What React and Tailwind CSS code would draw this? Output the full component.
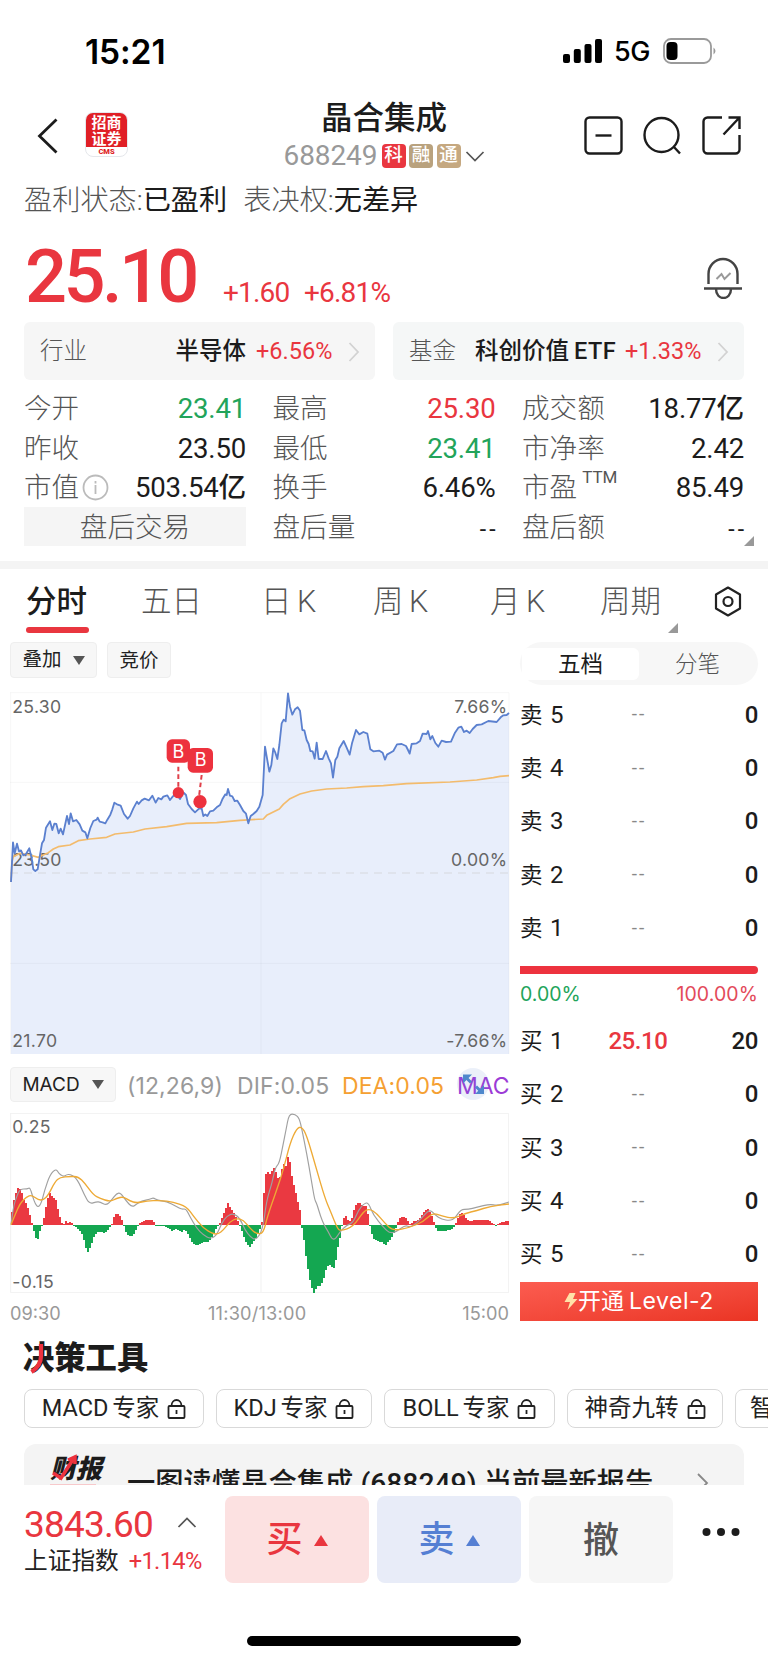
import React from 'react';

const PRICE_LINE = [
  [33,606],[39,487],[44,520],[51,491],[57,514],[63,511],[70,526],[78,522],[88,505],[95,535],[100,568],[106,573],[113,568],[120,525],[126,490],[132,480],[138,443],[150,424],[157,450],[163,431],[169,432],[176,460],[182,446],[189,463],[201,408],[207,432],[212,400],[219,424],[229,420],[239,433],[247,452],[256,457],[262,475],[271,444],[280,423],[290,419],[293,413],[299,425],[308,427],[316,430],[322,419],[331,404],[337,388],[343,368],[351,373],[362,377],[372,402],[383,416],[390,408],[400,385],[411,365],[416,372],[425,361],[434,356],[447,361],[457,347],[467,368],[475,354],[484,358],[490,350],[502,346],[510,360],[518,350],[528,340],[540,357],[550,337],[558,345],[564,372],[575,387],[585,397],[597,386],[605,385],[610,408],[616,403],[622,408],[630,394],[640,392],[650,382],[660,375],[667,358],[676,343],[680,345],[684,327],[690,347],[697,349],[704,363],[712,362],[720,375],[730,393],[738,401],[745,430],[752,408],[760,402],[770,393],[778,380],[788,345],
  [795,200],[801,235],[808,275],[814,255],[820,205],[826,218],[832,237],[838,195],[845,130],[851,119],[857,124],[864,40],[870,80],[877,104],[885,88],[893,82],[900,92],[907,150],[913,151],[920,180],[926,192],[931,213],[938,214],[944,236],[950,188],[956,237],[968,237],[978,213],[986,235],[993,250],[999,293],[1006,240],[1012,230],[1018,205],[1031,183],[1040,203],[1049,224],[1056,190],[1068,150],[1078,163],[1090,156],[1102,161],[1111,208],[1120,214],[1138,212],[1148,218],[1155,239],[1161,224],[1180,213],[1191,193],[1205,192],[1218,198],[1224,210],[1229,221],[1235,192],[1250,190],[1260,183],[1268,161],[1280,162],[1284,153],[1291,178],[1297,168],[1306,189],[1315,200],[1325,182],[1338,186],[1353,185],[1365,158],[1375,143],[1384,140],[1392,156],[1400,152],[1409,159],[1418,147],[1430,135],[1445,133],[1465,123],[1490,126],[1502,112],[1510,106],[1520,105],[1527,99],
];

const AVG_LINE = [
  [33,606],[36,545],[40,530],[60,520],[90,525],[115,532],[145,518],[160,507],[175,500],[210,495],[235,482],[270,477],[320,472],[345,462],[400,456],[435,447],[500,440],[560,430],[650,428],[720,421],[790,417],[800,406],[838,387],[850,373],[870,356],[900,342],[935,333],[980,327],[1040,324],[1090,320],[1150,317],[1220,311],[1350,306],[1430,300],[1480,293],[1500,289],[1527,287],
];

const MACD_HIST = [
  [33,554],[38,490],[45,470],[52,443],[64,450],[72,480],[80,490],[88,515],[94,545],[98,554],[102,572],[110,602],[115,595],[120,572],[126,554],[130,545],[138,500],[145,470],[150,458],[158,470],[168,480],[176,515],[184,545],[188,554],[196,548],[200,540],[206,552],[212,542],[220,554],[232,566],[244,578],[254,605],[262,640],[272,620],[282,590],[295,575],[315,578],[325,570],[335,554],[345,522],[357,522],[368,545],[374,560],[380,582],[392,590],[404,582],[412,560],[420,548],[440,540],[460,540],[466,556],[500,560],[515,572],[530,566],[545,578],[555,566],[565,585],[575,605],[590,618],[610,606],[625,606],[640,585],[652,560],[660,548],[672,520],[684,490],[696,510],[708,530],[716,548],[722,562],[735,600],[748,622],[760,608],[770,590],[780,566],[785,554],
  [788,530],[794,425],[800,392],[808,402],[814,400],[820,382],[827,392],[833,415],[840,412],[847,382],[853,371],[859,380],[864,350],[870,365],[876,407],[888,460],[895,490],[902,520],[906,565],[912,600],[920,665],[926,700],[934,740],[944,762],[950,738],[962,738],[970,720],[978,690],[986,675],[993,675],[1000,690],[1008,660],[1014,620],[1022,585],[1027,548],[1030,535],[1038,527],[1046,545],[1054,540],[1062,510],[1070,488],[1080,490],[1090,497],[1100,500],[1107,540],[1112,570],[1122,598],[1135,605],[1148,606],[1155,618],[1164,605],[1178,590],[1186,570],[1192,548],[1200,535],[1210,530],[1220,535],[1228,553],[1240,545],[1255,540],[1265,525],[1275,512],[1286,507],[1295,525],[1302,545],[1310,570],[1318,574],[1350,570],[1362,562],[1368,548],[1375,530],[1384,516],[1395,530],[1405,542],[1430,541],[1465,541],[1475,547],[1488,557],[1500,548],[1528,542],
];

const DIF_LINE = [
  [33,554],[40,500],[50,470],[60,447],[82,447],[90,442],[98,470],[106,492],[114,502],[124,490],[134,450],[150,404],[168,386],[176,400],[190,410],[200,404],[210,403],[226,412],[238,430],[252,462],[268,492],[290,485],[300,486],[320,496],[335,480],[350,460],[362,459],[378,482],[396,502],[410,492],[425,483],[450,478],[460,473],[472,481],[500,484],[530,500],[545,508],[558,506],[570,530],[590,565],[610,585],[632,597],[650,585],[665,550],[680,528],[700,520],[720,535],[735,570],[752,592],[768,600],[788,570],
  [800,480],[816,430],[826,382],[838,370],[850,310],[858,270],[867,222],[886,223],[898,235],[906,270],[920,340],[934,420],[944,480],[950,490],[962,530],[972,555],[985,575],[995,597],[1006,598],[1020,575],[1040,555],[1060,548],[1075,510],[1095,488],[1106,490],[1120,525],[1150,562],[1170,580],[1190,575],[1216,555],[1230,562],[1250,550],[1270,528],[1290,508],[1305,525],[1325,538],[1350,542],[1365,535],[1382,508],[1405,508],[1430,502],[1470,492],[1492,497],[1527,486],
];

const DEA_LINE = [
  [33,554],[45,525],[60,490],[80,470],[95,465],[115,480],[130,480],[145,465],[165,425],[180,412],[210,409],[235,410],[255,430],[280,465],[300,475],[330,485],[350,475],[370,470],[390,483],[410,489],[440,483],[480,481],[520,486],[560,500],[580,528],[610,565],[640,582],[655,582],[670,570],[690,545],[710,535],[730,540],[750,565],[770,582],[790,580],
  [802,530],[830,450],[850,390],[870,310],[890,265],[905,260],[920,285],[950,390],[975,475],[990,510],[1012,565],[1022,573],[1060,560],[1090,515],[1108,506],[1130,520],[1155,550],[1180,573],[1230,562],[1270,545],[1298,518],[1325,528],[1362,536],[1395,520],[1430,512],[1470,499],[1527,492],
];

const ZERO = 554;

const toPath = (pts) => 'M' + pts.map((p) => p.join(' ')).join('L');

// smooth curve through the midpoints
const toCurve = (pts) => {
  let d = `M${pts[0][0]} ${pts[0][1]}`;
  for (let i = 1; i < pts.length - 1; i++) {
    const [x, y] = pts[i];
    const [nx, ny] = pts[i + 1];
    d += `Q${x} ${y} ${(x + nx) / 2} ${(y + ny) / 2}`;
  }
  const last = pts[pts.length - 1];
  return `${d}L${last[0]} ${last[1]}`;
};

const valueAt = (pts, x) => {
  for (let i = 1; i < pts.length; i++) {
    if (pts[i][0] >= x) {
      const [x0, y0] = pts[i - 1];
      const [x1, y1] = pts[i];
      return y0 + ((y1 - y0) * (x - x0)) / (x1 - x0);
    }
  }
  return pts[pts.length - 1][1];
};

const bars = [];
for (let x = 36; x < 1526; x += 6) {
  bars.push({ x, y: valueAt(MACD_HIST, x) });
}

const stats = [
  [['今开', '23.41', 'text-[#22a45a]'], ['最高', '25.30', 'text-[#e9363f]'], ['成交额', '18.77亿', 'text-[#1c1c1c]']],
  [['昨收', '23.50', 'text-[#1c1c1c]'], ['最低', '23.41', 'text-[#22a45a]'], ['市净率', '2.42', 'text-[#1c1c1c]']],
  [['市值', '503.54亿', 'text-[#1c1c1c]'], ['换手', '6.46%', 'text-[#1c1c1c]'], ['市盈', '85.49', 'text-[#1c1c1c]']],
  [['盘后交易'], ['盘后量', '--', 'text-[#1c1c1c]'], ['盘后额', '--', 'text-[#1c1c1c]']],
];

const sells = [5, 4, 3, 2, 1];
const buys = [1, 2, 3, 4, 5];

const StatusBar = () => (
  <div className="flex h-[102px] items-center justify-between pl-[85px] pr-[51px]">
    <span className="mt-[2px] font-['Inter',sans-serif] text-[33.500px] font-semibold tracking-[-0.1px] text-black">15:21</span>
    <div className="flex items-center">
      <svg className="h-[24px] w-[40px]" viewBox="0 0 40 24">
        <rect x="0" y="15" width="7" height="9" rx="2" />
        <rect x="10.8" y="10" width="7" height="14" rx="2" />
        <rect x="21.5" y="5" width="7" height="19" rx="2" />
        <rect x="32" y="0" width="7" height="24" rx="2" />
      </svg>
      <span className="ml-[11px] mt-[2px] w-[49px] font-['Inter',sans-serif] text-[27px] font-medium tracking-[-0.5px] text-black">5G</span>
      <svg className="h-[26px] w-[54px]" viewBox="0 0 54 26">
        <rect x="1" y="1" width="47" height="24" rx="7" fill="none" stroke="#9a9a9a" strokeWidth="1.8" />
        <rect x="3.5" y="4" width="11" height="18" rx="4" />
        <path d="M50.5 9.500q4 3.500 0 7z" fill="#9a9a9a" />
      </svg>
    </div>
  </div>
);

const Header = () => (
  <div className="flex h-[70px] items-center pl-[36px]">
    <svg className="-mt-[2px] h-[36px] w-[22px]" viewBox="0 0 22 36" fill="none" stroke="#1c1c1c" strokeWidth="2.8">
      <path d="M20.500 1.500L3.500 18l17 16.500" />
    </svg>
    <div className="-mt-[6px] ml-[27px] flex h-[45px] w-[43px] flex-col items-center overflow-hidden rounded-lg border border-gray-200 bg-white">
      <div className="flex h-[34px] w-[43px] shrink-0 flex-col items-center justify-center bg-[#e01f26] font-['Noto_Sans_CJK_SC',sans-serif] text-[15px] font-bold leading-[16px] text-white">
        <span>招商</span>
        <span>证券</span>
      </div>
      <span className="font-['Roboto',sans-serif] text-[7.500px] font-black leading-[9px] text-[#e01f26]">CMS</span>
    </div>
    <div className="ml-[121px] flex w-[270px] flex-col items-center">
      <h1 className="h-[36px] text-[31.5px] font-medium leading-[38px] text-[#1c1c1c]">晶合集成</h1>
      <div className="mt-[2px] flex h-[36px] items-center">
        <span className="w-[98px] text-[28px] leading-[36px] tracking-[-0.1px] text-[#999]">688249</span>
        <div className="flex gap-[3.500px] text-[18.500px] font-medium leading-[23px] text-white">
          <span className="h-[24px] w-[24px] rounded bg-[#e9363f] text-center">科</span>
          <span className="h-[24px] w-[24px] rounded bg-[#b9a27e] text-center">融</span>
          <span className="h-[24px] w-[24px] rounded bg-[#c5a880] text-center">通</span>
        </div>
        <svg className="ml-[4px] h-[11px] w-[20px]" viewBox="0 0 20 11" fill="none" stroke="#555" strokeWidth="1.7">
          <path d="M1.500 1L10 9.500L18.500 1" />
        </svg>
      </div>
    </div>
    <div className="-mt-[3px] ml-[65px] flex gap-[20px]">
      <svg className="h-[39px] w-[39px]" viewBox="0 0 39 39" fill="none" stroke="#1c1c1c" strokeWidth="2.4">
        <rect x="1.500" y="1.500" width="36" height="36" rx="4" />
        <path d="M11.500 19.500h16" />
      </svg>
      <svg className="h-[39px] w-[39px]" viewBox="0 0 39 39" fill="none" stroke="#1c1c1c" strokeWidth="2.4">
        <circle cx="18.500" cy="19" r="17" />
        <path d="M30.500 30.500l6.500 7" />
      </svg>
      <svg className="h-[39px] w-[39px]" viewBox="0 0 39 39" fill="none" stroke="#1c1c1c" strokeWidth="2.4">
        <path d="M20 1.500H5.500a4 4 0 0 0-4 4v28a4 4 0 0 0 4 4h28a4 4 0 0 0 4-4V19" />
        <path d="M26.500 1.500H37.500V13M37.500 1.500L21.500 18.500" />
      </svg>
    </div>
  </div>
);

const Arrow = () => (
  <svg className="h-[20px] w-[12px]" viewBox="0 0 12 20" fill="none" stroke="#d2d2d2" strokeWidth="1.8">
    <path d="M1.500 1l8.500 9l-8.500 9" />
  </svg>
);

const Quote = () => (
  <>
    <div className="flex h-[54px] items-center pl-[24px] text-[28.2px] leading-[54px] text-[#1c1c1c]">
      <div className="mt-[3px] flex">
        <span className="font-light text-[#555]">盈利状态:</span>已盈利
        <span className="ml-[16px] font-light text-[#555]">表决权:</span>无差异
      </div>
    </div>
    <div className="flex h-[96px] items-center justify-between pl-[25px] pr-[25px]">
      <div className="flex items-baseline pt-[5px] text-[#e9363f]">
        <span className="w-[198px] text-[74px] font-medium leading-[100px] tracking-[-3.6px]">25.10</span>
        <span className="w-[81px] text-[28px] tracking-[-0.8px]">+1.60</span>
        <span className="text-[28px] tracking-[-0.8px]">+6.81%</span>
      </div>
      <svg className="mt-[7px] h-[42px] w-[40px]" viewBox="0 0 40 42" fill="none" stroke="#444" strokeWidth="2.4">
        <path d="M5.500 27V17a14.500 15 0 0 1 29 0v10M1 31.500h38M13 32c0 12 15 12 15 0" />
        <path d="M13.500 22l5-5l3 5l6-6" stroke="#999" strokeWidth="2" />
      </svg>
    </div>
    <div className="flex h-[58px] gap-[18px] px-[24px] text-[23.500px]">
      <div className="flex w-[351px] items-center rounded-md bg-[#f6f6f6] pl-[16px] pr-[15px] pt-[2px]">
        <span className="font-light text-[#555]">行业</span>
        <span className="ml-auto font-medium text-[#1c1c1c]">半导体</span>
        <span className="ml-[10px] w-[92px] text-[#e9363f]">+6.56%</span>
        <Arrow />
      </div>
      <div className="flex w-[351px] items-center rounded-md bg-[#f5f7f7] pl-[16px] pr-[15px] pt-[2px]">
        <span className="font-light text-[#555]">基金</span>
        <span className="ml-auto font-medium text-[#1c1c1c]">科创价值<span className="ml-[5px] tracking-[0.4px]">ETF</span></span>
        <span className="ml-[9px] w-[92px] text-[#e9363f]">+1.33%</span>
        <Arrow />
      </div>
    </div>
  </>
);

const Stats = () => (
  <div className="relative mt-[8px] px-[24px]">
    {stats.map((row, i) => (
      <div key={i} className="grid h-[39.500px] grid-cols-[222px_223px_222px] gap-x-[26.500px] text-[27.6px] leading-[41px]">
        {row.map(([label, value, color]) =>
          value ? (
            <div key={label} className="flex justify-between">
              <span className="flex font-light text-[#555]">
                {label}
                {label === '市值' && (
                  <svg className="ml-[3px] mt-[7px] h-[27px] w-[27px]" viewBox="0 0 27 27" fill="none" stroke="#bbb" strokeWidth="1.8">
                    <circle cx="13.500" cy="13.500" r="12" />
                    <path d="M13.500 11v9M13.500 7v2.500" />
                  </svg>
                )}
                {label === '市盈' && <sup className="-top-[9px] ml-[5px] text-[17px] font-normal leading-[39px]">TTM</sup>}
              </span>
              {value === '--' ? (
                <span className={`flex items-center gap-[3px] pt-[2px] ${color}`}>
                  <span className="text-[23px]">-</span>
                  <span className="text-[23px]">-</span>
                </span>
              ) : (
                <span className={`font-[450] tracking-[-0.2px] ${color}`}>{value}</span>
              )}
            </div>
          ) : (
            <div key={label} className="h-[39px] bg-[#f5f5f5] text-center font-light text-[#555]">{label}</div>
          )
        )}
      </div>
    ))}
    <svg className="absolute bottom-0 right-[14px] h-[10px] w-[10px]" viewBox="0 0 10 10" fill="#999">
      <path d="M10 0v10H0z" />
    </svg>
  </div>
);

const Tabs = () => (
  <div className="mt-[15px] border-t-8 border-[#f4f4f4]">
    <div className="relative flex h-[73px] pl-[26px] pr-[26px] text-[30.500px] font-light leading-[66px] text-[#555] [word-spacing:-2px]">
      <div className="mr-[52px] flex w-[63px] flex-col">
        <span className="h-[58px] font-medium text-[#1c1c1c]">分时</span>
        <span className="h-[6px] rounded-full bg-[#e9363f]" />
      </div>
      <span className="w-[120px]">五日</span>
      <span className="w-[112px]">日 K</span>
      <span className="w-[117px]">周 K</span>
      <span className="w-[110px]">月 K</span>
      <span className="flex-1">周期</span>
      <svg className="mt-[17px] h-[31px] w-[28px]" viewBox="0 0 28 31" fill="none" stroke="#222" strokeWidth="2.2">
        <path d="M14 1.500L26 8.500v14L14 29.500L2 22.500v-14z" strokeLinejoin="round" />
        <circle cx="14" cy="15.500" r="4.500" />
      </svg>
      <svg className="absolute right-[90px] top-[54px] h-[10px] w-[10px]" viewBox="0 0 10 10" fill="#999">
        <path d="M10 0v10H0z" />
      </svg>
    </div>
  </div>
);

const PriceChart = () => (
  <svg className="mt-[14px] h-[362px] w-[499px] overflow-visible" viewBox="30 36 1497 1086">
    <path d={`${toPath(PRICE_LINE)}V1122H33Z`} fill="#e8eefb" />
    <path d="M30 38H1527V1122M32 38V1122M30 307H1527M783 38V1122M30 850H1527" fill="none" stroke="#000" strokeOpacity="0.035" strokeWidth="3" />
    <path d="M30 579H1527" stroke="#dcdfe8" strokeWidth="4" strokeDasharray="24 18" />
    <g fill="#666" fontFamily="Inter, sans-serif" fontSize="53" letterSpacing="0.8">
      <text x="37" y="98">25.30</text>
      <text x="37" y="559">23.50</text>
      <text x="37" y="1102">21.70</text>
      <text x="1522" y="98" textAnchor="end">7.66%</text>
      <text x="1522" y="559" textAnchor="end">0.00%</text>
      <text x="1522" y="1102" textAnchor="end">-7.66%</text>
    </g>
    <path d={toPath(AVG_LINE)} fill="none" stroke="#f3bb6c" strokeWidth="5" strokeLinejoin="round" />
    <path d={toPath(PRICE_LINE)} fill="none" stroke="#5b80cf" strokeWidth="5.500" strokeLinejoin="round" />
    <g fill="#ed323e">
      <path d="M535 260V322M605 285L597 350" stroke="#e0404a" strokeWidth="6" strokeDasharray="14 9" />
      <circle cx="535" cy="338" r="17" />
      <circle cx="600" cy="365" r="20" />
      <rect x="500" y="178" width="70" height="70" rx="16" />
      <rect x="563" y="204" width="76" height="74" rx="16" />
      <g fill="#fff" fontFamily="Inter, sans-serif" fontSize="54" textAnchor="middle">
        <text x="535" y="234">B</text>
        <text x="602" y="259">B</text>
      </g>
    </g>
  </svg>
);

const MacdChart = () => (
  <svg className="mt-[11px] h-[180px] w-[499px]" viewBox="30 219 1497 540">
    <path d="M30 220H1526V758H32V220M783 220V758" fill="none" stroke="#f1f1f1" strokeWidth="3" />
    <g shapeRendering="crispEdges">
      {bars.map((b) => (
        <rect
          key={b.x}
          x={b.x - 3}
          y={Math.min(b.y, ZERO)}
          width="6"
          height={Math.max(Math.abs(b.y - ZERO), 3)}
          fill={b.y < ZERO ? '#ea3941' : '#14a751'}
        />
      ))}
    </g>
    <path d={toCurve(DIF_LINE)} fill="none" stroke="#a0a0a0" strokeWidth="3.500" />
    <path d={toCurve(DEA_LINE)} fill="none" stroke="#eeaa35" strokeWidth="4" />
    <g fill="#666" fontFamily="Inter, sans-serif" fontSize="53" letterSpacing="0.8">
      <text x="37" y="280">0.25</text>
      <text x="37" y="743">-0.15</text>
    </g>
  </svg>
);

const Charts = () => (
  <div className="w-[499px]">
    <div className="flex h-[36px] gap-[10px] text-[19.500px] leading-[36px] text-[#222]">
      <span className="flex w-[87px] items-center justify-center gap-[11px] rounded border border-[#eee] bg-[#f7f7f7]">
        叠加
        <svg className="h-[9px] w-[12px]" viewBox="0 0 12 9" fill="#555"><path d="M0 0h12L6 9z" /></svg>
      </span>
      <span className="w-[64px] rounded border border-[#eee] bg-[#f7f7f7] text-center">竞价</span>
    </div>
    <PriceChart />
    <div className="relative mt-[13px] flex h-[35px] items-center overflow-hidden whitespace-nowrap font-['Inter',sans-serif] text-[23px] leading-[38px] text-[#999]">
      <span className="flex h-[35px] w-[106px] shrink-0 items-center justify-center gap-[12px] rounded border border-[#eee] bg-[#f7f7f7] text-[19px] text-[#222]">
        MACD
        <svg className="h-[9px] w-[12px]" viewBox="0 0 12 9" fill="#555"><path d="M0 0h12L6 9z" /></svg>
      </span>
      <span className="ml-[11px] mt-[3px] w-[110px] shrink-0 tracking-[0.1px]">(12,26,9)</span>
      <span className="mt-[3px] w-[105px] shrink-0 tracking-[0.1px]">DIF:0.05</span>
      <span className="mt-[3px] w-[115px] shrink-0 tracking-[0.1px] text-[#f5a032]">DEA:0.05</span>
      <span className="mt-[3px] text-[#9c3bd6]">MAC</span>
      <svg className="absolute right-[19px] top-0 h-[34px] w-[34px]" viewBox="0 0 34 34">
        <circle cx="17" cy="17" r="16" fill="#5b80cf" fillOpacity="0.12" />
        <path d="M7 7.500h9l-9 9zM28 27h-9l9-9z" fill="#4f88cc" />
        <path d="M10 10.500l5 5M20 19.500l5 5" stroke="#4f88cc" strokeWidth="3" />
      </svg>
    </div>
    <MacdChart />
    <div className="flex h-[40px] justify-between font-['Inter',sans-serif] text-[18.200px] leading-[40px] text-[#999]">
      <span className="w-[198px]">09:30</span>
      <span className="flex-1 tracking-[0.2px]">11:30/13:00</span>
      <span>15:00</span>
    </div>
  </div>
);

const Level = ({ side, n, price, volume }) => (
  <div className="flex h-[53.300px] items-center text-[24px] text-[#1c1c1c]">
    <span className="w-[88px] text-[22.500px]">{side} <span className="ml-[2px] text-[24px]">{n}</span></span>
    {price ? (
      <span className="w-[60px] text-center font-medium tracking-[-0.4px] text-[#e9363f]">{price}</span>
    ) : (
      <span className="flex w-[60px] justify-center gap-[2px] text-[19px] text-[#888]">
        <span>-</span>
        <span>-</span>
      </span>
    )}
    <span className="ml-auto font-medium tracking-[-0.4px]">{volume}</span>
  </div>
);

const OrderBook = () => (
  <div className="w-[238px]">
    <div className="flex h-[43px] items-center rounded-full bg-[#f7f7f7] px-[2px] text-center text-[22.500px]">
      <span className="h-[32px] w-[117px] rounded-md bg-white leading-[33px] text-[#1c1c1c]">五档</span>
      <span className="flex-1 pt-[2px] font-light text-[#555]">分笔</span>
    </div>
    <div className="mt-[3px]">
      {sells.map((n) => <Level key={n} side="卖" n={n} volume={0} />)}
    </div>
    <div className="mt-[12px] h-[8px] rounded-r-full bg-[#ed323e]" />
    <div className="flex h-[40px] justify-between font-['Inter',sans-serif] text-[19.500px] leading-[40px]">
      <span className="text-[#22a45a]">0.00%</span>
      <span className="tracking-[0.1px] text-[#e34a5a]">100.00%</span>
    </div>
    {buys.map((n) => <Level key={n} side="买" n={n} price={n === 1 ? '25.10' : ''} volume={n === 1 ? 20 : 0} />)}
    <div className="mt-[1px] flex h-[39px] items-center justify-center bg-gradient-to-br from-[#fc5c50] to-[#ea3423] font-['Inter','Noto_Sans_CJK_SC',sans-serif] text-[23px] leading-[39px] text-white">
      <svg className="h-[17px] w-[14px]" viewBox="0 0 13 17" fill="#ffe2a8">
        <path d="M5 0h6L8.500 6H13L3 17l2.500-8H0z" />
      </svg>
      开通<span className="ml-[5px] tracking-[0.5px]">Level-2</span>
    </div>
  </div>
);

const Lock = () => (
  <svg className="ml-[8px] h-[20px] w-[19px]" viewBox="0 0 19 20" fill="none" stroke="#222" strokeWidth="1.8">
    <rect x="1.500" y="7" width="16" height="12" rx="1" />
    <path d="M4.500 7C4.500-1 14.500-1 14.500 7M9.500 11v4" />
  </svg>
);

const Tools = () => (
  <div className="h-[152px] overflow-hidden">
    <h2 className="relative h-[48px] pl-[23px] text-[31.300px] font-black leading-[52px] text-[#1c1c1c]">
      决策工具
      <svg className="absolute left-[30px] top-[11px] h-[30px] w-[14px]" viewBox="0 0 14 30" fill="none" stroke="#ed323e" strokeWidth="4.200">
        <path d="M11 0v12q0 10-9.500 16" />
      </svg>
    </h2>
    <div className="mt-[8px] flex gap-[12px] overflow-hidden whitespace-nowrap pl-[24px] text-[23.500px] leading-[39px] text-[#222] [word-spacing:-2px]">
      <span className="flex h-[39px] w-[180px] shrink-0 items-center justify-center rounded-lg border border-[#d9d9d9]">MACD 专家<Lock /></span>
      <span className="flex h-[39px] w-[156px] shrink-0 items-center justify-center rounded-lg border border-[#d9d9d9]">KDJ 专家<Lock /></span>
      <span className="flex h-[39px] w-[171px] shrink-0 items-center justify-center rounded-lg border border-[#d9d9d9]">BOLL 专家<Lock /></span>
      <span className="flex h-[39px] w-[156px] shrink-0 items-center justify-center rounded-lg border border-[#d9d9d9]">神奇九转<Lock /></span>
      <span className="flex h-[39px] w-[156px] shrink-0 items-center rounded-lg border border-[#d9d9d9] pl-[14px]">智能</span>
    </div>
    <div className="mx-[24px] mt-[16px] flex h-[84px] rounded-xl bg-[#f4f4f4] pl-[26px]">
      <div className="relative w-[77px] pt-[11px] text-[26px] font-black italic leading-[28px] text-[#1c1c1c]">
        财报
        <div className="mt-[1px] h-[10px] w-[46px] bg-[#f7c9cb]" />
        <svg className="absolute left-[2px] top-[10px] h-[27px] w-[26px]" viewBox="0 0 26 27" fill="none" stroke="#ed323e" strokeWidth="3.500">
          <path d="M1 19l8 5L22 4M16 6l7-3v7" />
        </svg>
      </div>
      <p className="mt-[23px] w-[570px] whitespace-nowrap text-[28.300px] font-medium leading-[34px] text-[#1c1c1c]">一图读懂晶合集成 (688249) 当前最新报告</p>
      <svg className="mt-[29px] h-[20px] w-[12px]" viewBox="0 0 12 20" fill="none" stroke="#888" strokeWidth="1.8">
        <path d="M1 1l9 9l-9 9" />
      </svg>
    </div>
  </div>
);

const BottomBar = () => (
  <div className="h-[178px] bg-white pt-[11px]">
    <div className="flex h-[87px] pl-[24px]">
      <div className="w-[201px]">
        <div className="flex h-[56px] items-center text-[37px] leading-[56px] tracking-[-0.8px] text-[#e9363f]">
          <span className="w-[153px] pt-[1px]">3843.60</span>
          <svg className="-mt-[4px] h-[11px] w-[20px]" viewBox="0 0 20 11" fill="none" stroke="#555" strokeWidth="1.7">
            <path d="M1.500 10L10 1.500L18.500 10" />
          </svg>
        </div>
        <div className="flex h-[20px] items-center text-[23.700px] text-[#222]">
          上证指数<span className="ml-[10px] tracking-[-0.7px] text-[#e9363f]">+1.14%</span>
        </div>
      </div>
      <div className="flex gap-[8px] text-[36px]">
        <button className="flex w-[144px] items-center justify-center gap-[11px] rounded-lg bg-[#fce1e1] pt-[1px] font-medium text-[#e9363f]">
          买
          <svg className="h-[11px] w-[14px]" viewBox="0 0 14 11" fill="currentColor"><path d="M7 0l7 11H0z" /></svg>
        </button>
        <button className="flex w-[144px] items-center justify-center gap-[11px] rounded-lg bg-[#e8ecf8] pt-[1px] font-medium text-[#557fd3]">
          卖
          <svg className="h-[11px] w-[14px]" viewBox="0 0 14 11" fill="currentColor"><path d="M7 0l7 11H0z" /></svg>
        </button>
        <button className="w-[144px] rounded-lg bg-[#f6f6f6] pt-[2px] font-medium text-[#555]">撤</button>
      </div>
      <svg className="ml-[29px] mt-[32px] h-[8px] w-[38px]" viewBox="0 0 38 8" fill="#1c1c1c">
        <circle cx="4.500" cy="4" r="4" />
        <circle cx="19" cy="4" r="4" />
        <circle cx="33.500" cy="4" r="4" />
      </svg>
    </div>
    <div className="mx-auto mt-[53px] h-[10px] w-[274px] rounded-full bg-black" />
  </div>
);

const App = () => {
  return (
    <div className="h-[1663px] w-[768px] overflow-hidden bg-white font-['Roboto','Noto_Sans_CJK_SC',sans-serif]">
      <StatusBar />
      <Header />
      <Quote />
      <Stats />
      <Tabs />
      <div className="flex h-[691px] gap-[11px] pl-[10px]">
        <Charts />
        <OrderBook />
      </div>
      <Tools />
      <BottomBar />
    </div>
  );
};

export default App;
